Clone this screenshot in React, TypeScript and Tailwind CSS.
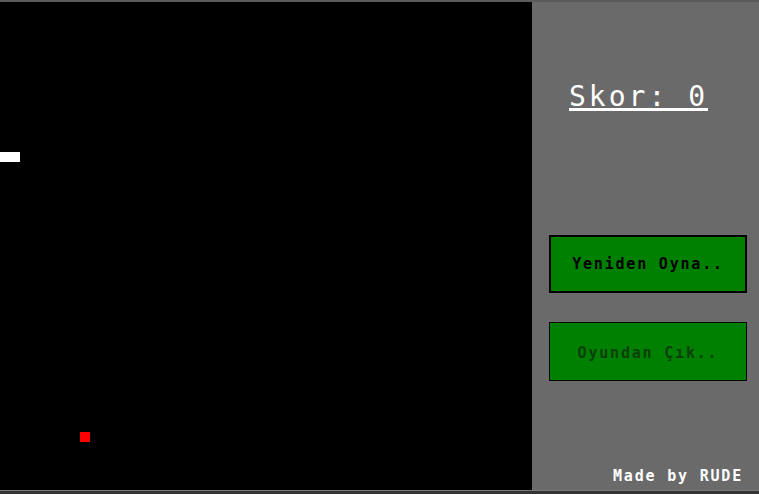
import React from "react";

const mono = { fontFamily: '"DejaVu Sans Mono", "Liberation Mono", monospace' };

export default function App() {
  return (
    <div className="w-[759px] h-[494px] flex flex-col bg-[#333333] overflow-hidden" style={mono}>
      <div className="h-[2px] bg-[#5a5a5a]" />
      <div className="flex h-[488px]">
        {/* game board */}
        <div className="relative w-[532px] h-full bg-black">
          <div className="absolute left-0 top-[150px] w-[20px] h-[10px] bg-white" />
          <div className="absolute left-[80px] top-[430px] w-[10px] h-[10px] bg-[#ff0000]" />
        </div>

        {/* side panel */}
        <div className="flex-1 flex flex-col bg-[#6a6a6a]">
          <div className="mt-[81px] pl-[37px] h-[28px] text-[28px] leading-[28px] text-white tracking-[3px] underline decoration-[3px] underline-offset-[2px] whitespace-pre">
            Skor: 0
          </div>

          <button className="mt-[124px] ml-[17px] w-[198px] h-[58px] bg-[#008000] border-2 border-black text-[15px] font-bold tracking-[1.8px] text-black">
            Yeniden Oyna..
          </button>
          <button className="mt-[29px] ml-[17px] w-[198px] h-[59px] pt-[3px] bg-[#008000] border border-black text-[15px] font-bold tracking-[1.8px] text-[#0b3f0b]">
            Oyundan Çık..
          </button>

          <div className="flex-1" />
          <div className="pr-[16px] pb-[6px] text-right text-[15px] leading-[15px] font-bold tracking-[1.8px] text-white">
            Made by RUDE
          </div>
        </div>
      </div>
      <div className="h-[1px] bg-[#7a7a7a]" />
      <div className="flex-1 bg-[#333333]" />
    </div>
  );
}
